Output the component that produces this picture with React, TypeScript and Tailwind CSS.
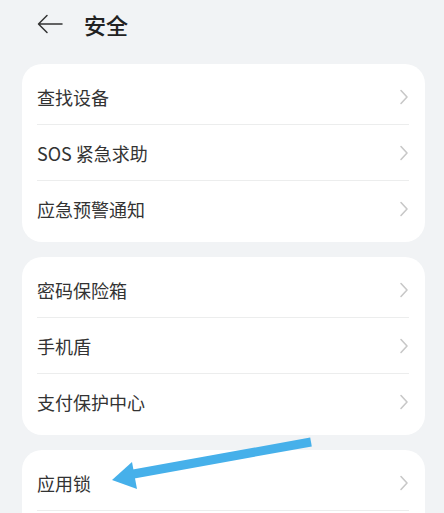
import React from "react";

const groups = [
  ["查找设备", "SOS 紧急求助", "应急预警通知"],
  ["密码保险箱", "手机盾", "支付保护中心"],
  ["应用锁"],
];

function Chevron() {
  return (
    <svg width="10" height="16" viewBox="0 0 10 16" fill="none">
      <path d="M2 1.5 L8 8 L2 14.5" stroke="#c8c8c8" strokeWidth="1.6" strokeLinecap="round" strokeLinejoin="round" />
    </svg>
  );
}

export default function App() {
  return (
    <div
      className="relative w-[444px] h-[513px] overflow-hidden bg-[#f1f3f5]"
      style={{ fontFamily: '"Noto Sans CJK SC", "Noto Sans", sans-serif' }}
    >
      <div className="flex items-center h-[48px] pl-[37px]">
        <svg width="26" height="20" viewBox="0 0 26 20" fill="none">
          <path d="M25 10 H2 M10 1.5 L1.5 10 L10 18.5" stroke="#333" strokeWidth="1.5" strokeLinecap="round" strokeLinejoin="round" />
        </svg>
        <span className="ml-[21px] text-[22px] leading-none text-[#222] font-medium">安全</span>
      </div>
      <div className="flex flex-col gap-[15px] px-[22px] pt-[16px]">
        {groups.map((g, gi) => (
          <div key={gi} className="bg-white rounded-[20px] py-[5px] pl-[15px] pr-[16px] w-[403px] shrink-0">
            {g.map((t, i) => (
              <div
                key={t}
                className={`flex items-center justify-between h-[56px] ${i < g.length - 1 || gi === 2 ? "border-b border-[#eceded]" : ""}`}
              >
                <span className="text-[18px] text-[#333] leading-none">{t}</span>
                <Chevron />
              </div>
            ))}
            {gi === 2 && <div className="h-[56px]" />}
          </div>
        ))}
      </div>
      <svg className="absolute left-0 top-0 pointer-events-none" width="444" height="513" viewBox="0 0 444 513">
        <path d="M311 442 L128 475" stroke="#46b0ea" strokeWidth="9" />
        <path d="M112 480 L132 462 L137 489 Z" fill="#46b0ea" />
      </svg>
    </div>
  );
}
